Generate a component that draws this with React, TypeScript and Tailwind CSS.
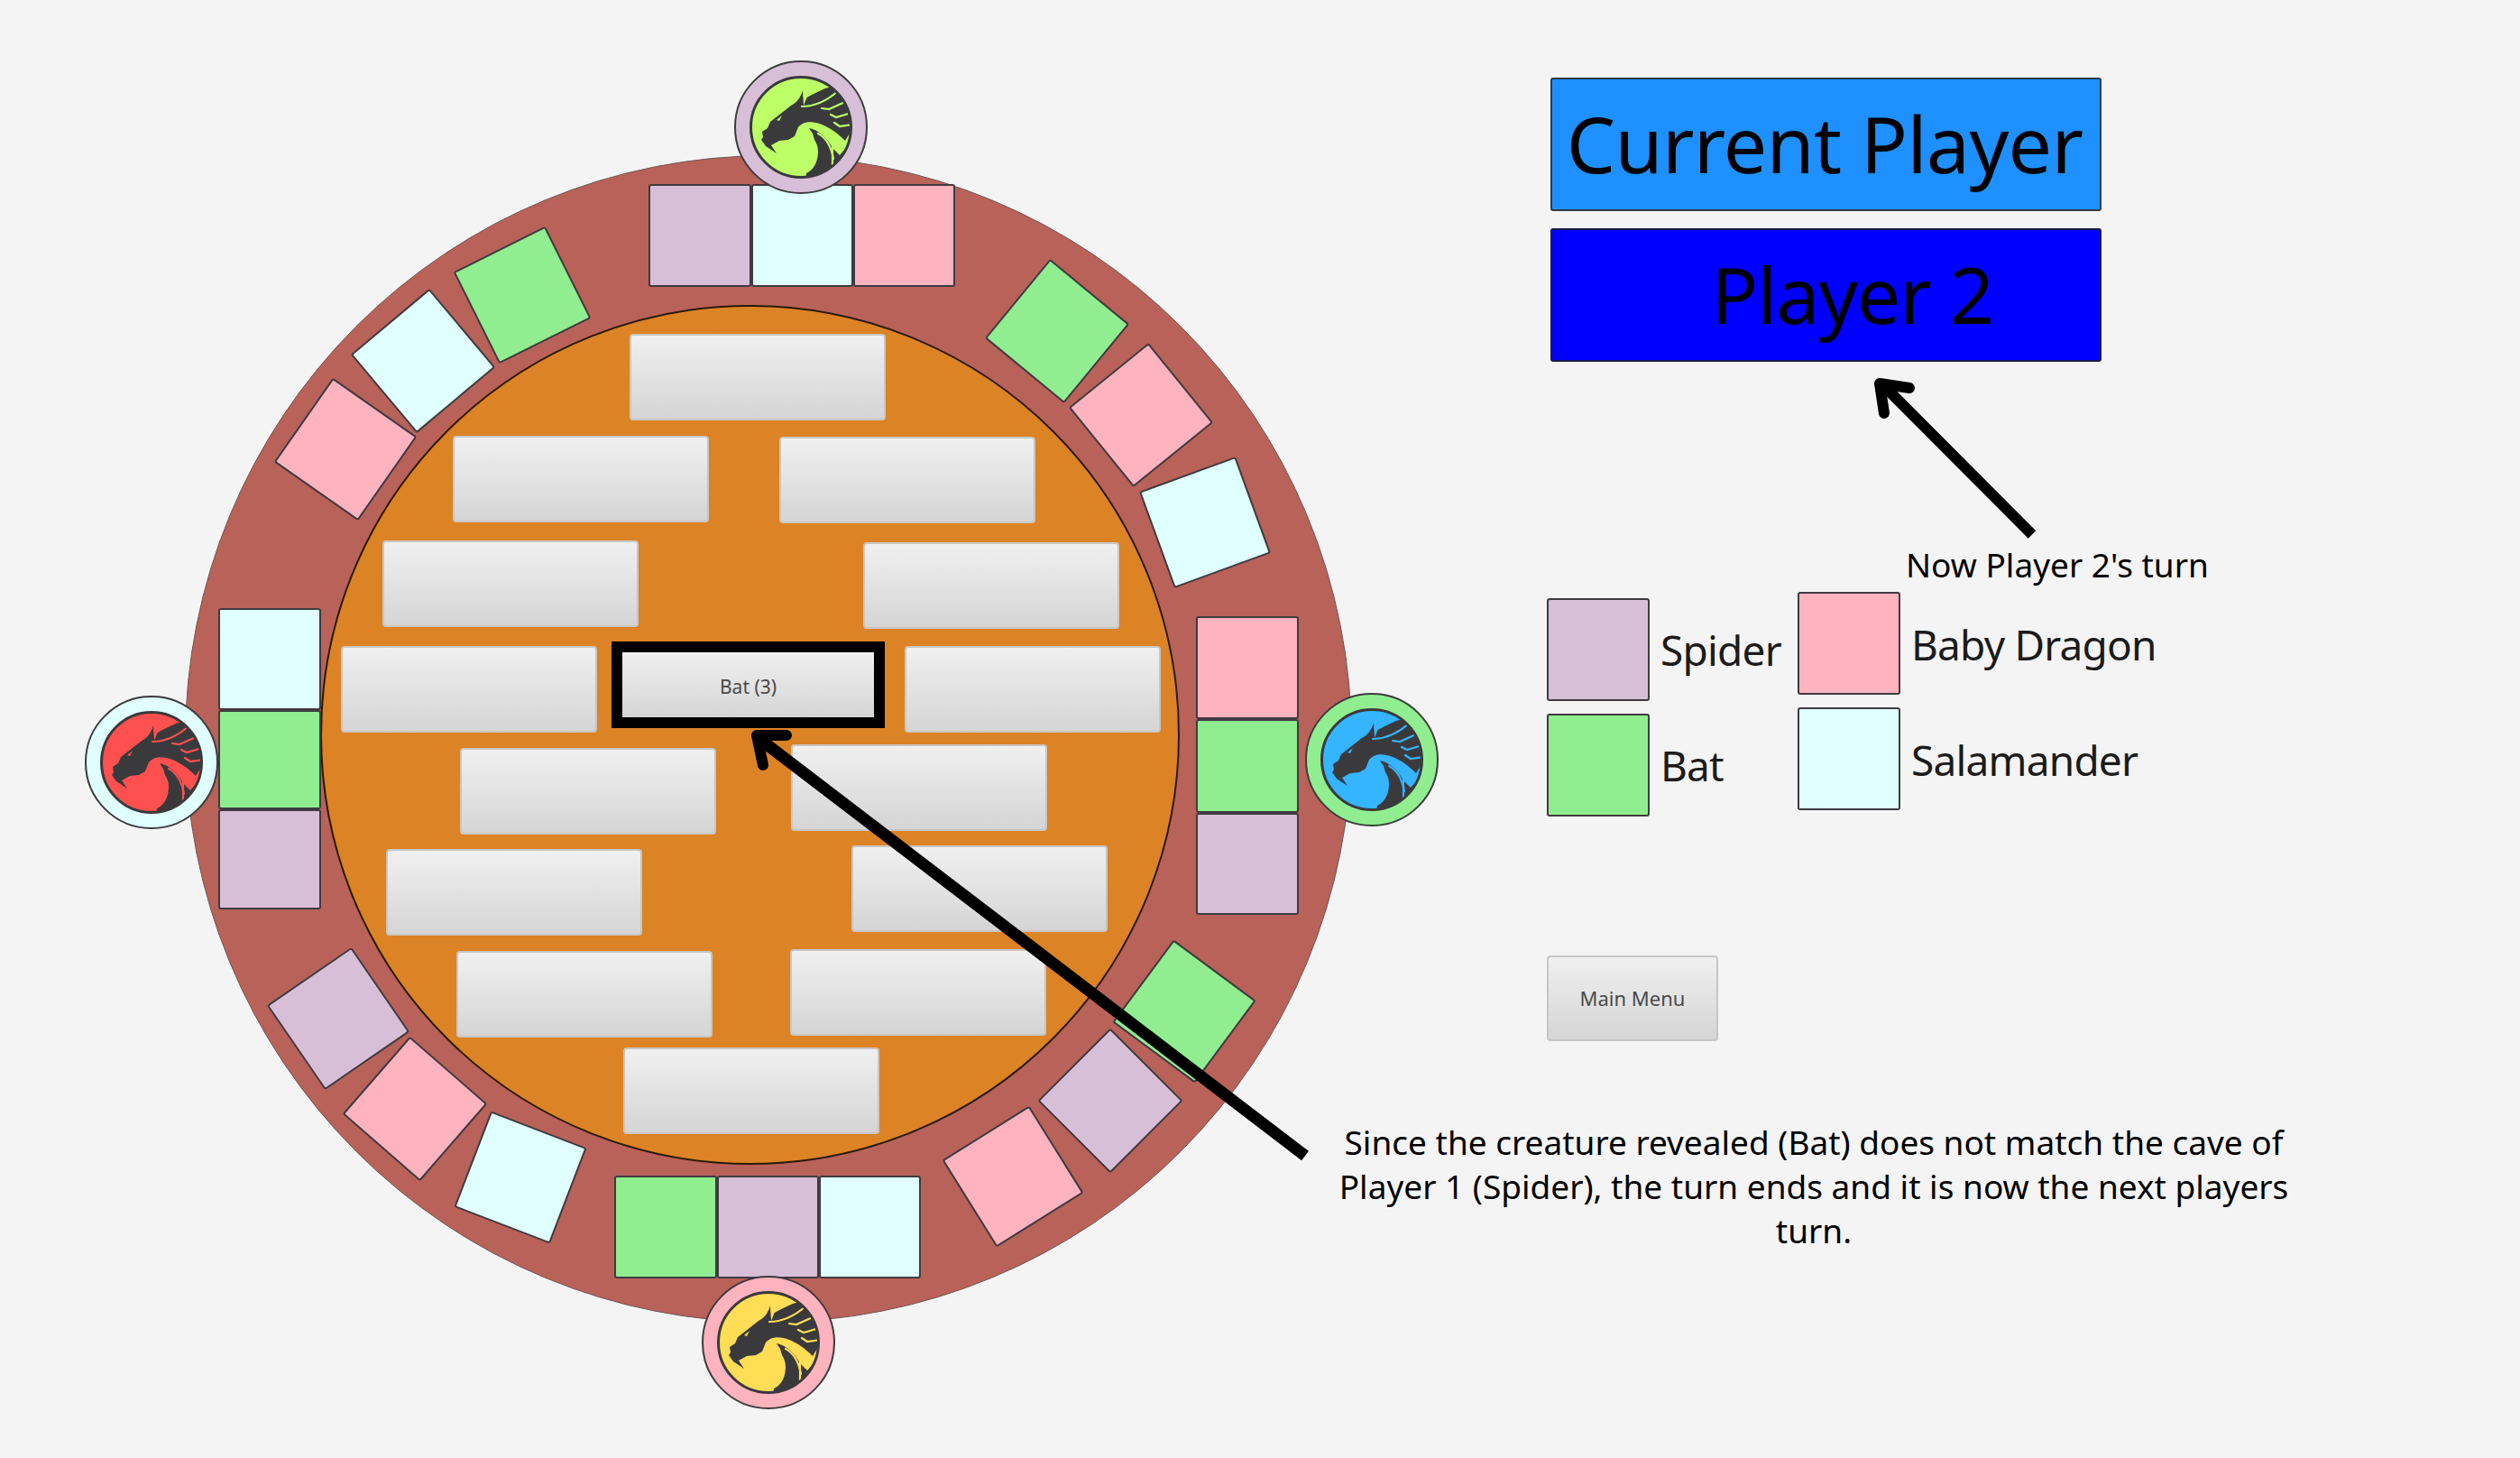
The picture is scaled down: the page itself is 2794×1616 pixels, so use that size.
const spider = "bg-[#d8bfd8]";
const bat = "bg-[#90ee90]";
const babyDragon = "bg-[#ffb3bf]";
const salamander = "bg-[#e0ffff]";

const angledTiles = [
  { color: bat, place: "left-[522px] top-[270px] rotate-[-26.5deg]" },
  { color: salamander, place: "left-[412px] top-[343px] rotate-[-40deg]" },
  { color: babyDragon, place: "left-[326px] top-[441px] rotate-[-55deg]" },
  { color: bat, place: "left-[1115px] top-[310px] rotate-[39.5deg]" },
  { color: babyDragon, place: "left-[1208px] top-[403px] rotate-[51deg]" },
  { color: salamander, place: "left-[1279px] top-[522px] rotate-[-20deg]" },
  { color: spider, place: "left-[318px] top-[1072px] rotate-[-34.5deg]" },
  { color: babyDragon, place: "left-[403px] top-[1172px] rotate-[-49deg]" },
  { color: salamander, place: "left-[520px] top-[1248px] rotate-[21deg]" },
  { color: bat, place: "left-[1256px] top-[1064px] rotate-[36.5deg]" },
  { color: spider, place: "left-[1174px] top-[1163px] rotate-[45deg]" },
  { color: babyDragon, place: "left-[1066px] top-[1247px] rotate-[-32deg]" },
];

const caveButtons = [
  "left-[698px] top-[370px]",
  "left-[502px] top-[483px]",
  "left-[864px] top-[484px]",
  "left-[424px] top-[599px]",
  "left-[957px] top-[601px]",
  "left-[378px] top-[716px]",
  "left-[1003px] top-[716px]",
  "left-[510px] top-[829px]",
  "left-[877px] top-[825px]",
  "left-[428px] top-[941px]",
  "left-[944px] top-[937px]",
  "left-[506px] top-[1054px]",
  "left-[876px] top-[1052px]",
  "left-[691px] top-[1161px]",
];

const buttonSkin = "bg-linear-to-b from-[#f0f0f0] to-[#d5d5d5] text-[#4a4a4a]";

function Tile({ color, className = "" }: { color: string; className?: string }) {
  return <div className={`rounded-[3px] border-2 border-[#3f3b40] ${color} ${className}`} />;
}

function DragonBadge({ id, ring, disc, place }: { id: string; ring: string; disc: string; place: string }) {
  return (
    <div className={`absolute flex h-[148px] w-[148px] items-center justify-center rounded-full border-2 border-[#3c3c3c] ${ring} ${place}`}>
      <svg viewBox="0 0 114 114" className={`h-[114px] w-[114px] ${disc}`}>
        <defs>
          <clipPath id={id}>
            <circle cx="57" cy="57" r="55" />
          </clipPath>
        </defs>
        <circle cx="57" cy="57" r="55.5" fill="currentColor" />
        <g clipPath={`url(#${id})`}>
          <path
            fill="#3a3a3c"
            d="M59 16 C57 24 52 30 46 33 L32 44 L23 51 L20 58 L14 62 L15 68 L13 71 L18 78 L30 86 L24 77 L33 72 L43 71 L50 67 L54 57 C60 50 70 50 80 54 C90 58 98 64 106 72 L116 56 L112 24 L98 10 L84 14 L64 23 L60 33 Z"
          />
          <path
            fill="#3a3a3c"
            d="M66 58 C76 60 86 68 92 80 L100 88 L116 70 L116 116 L62 116 L63 108 C72 104 76 94 76 84 C76 78 74 74 72 71 L70 64 Z"
          />
          <g fill="none" stroke="currentColor" strokeWidth="2.2" strokeLinecap="round">
            <path d="M58 34 C68 34 82 31 98 17" />
            <path d="M62 22 L84 10" strokeWidth="5" />
            <path d="M80 36 L88 37 L106 29" />
            <path d="M90 43 L96 46 L113 41" />
            <path d="M94 52 L100 56 L114 54" />
            <path d="M60 56 C72 53 88 60 104 76" strokeWidth="3" />
            <path d="M76 64 C84 68 90 76 93 92" />
            <path d="M92 78 L92 100" />
          </g>
          <path fill="currentColor" d="M30 49 L36 44 L33 50 Z" />
        </g>
        <circle cx="57" cy="57" r="55.5" fill="none" stroke="#3a3a3c" strokeWidth="3" />
      </svg>
    </div>
  );
}

function LegendRow({ color, label, labelClass = "" }: { color: string; label: string; labelClass?: string }) {
  return (
    <div className="flex h-[114px] items-center gap-[12px]">
      <Tile color={color} className="h-[114px] w-[114px]" />
      <span className={`text-[46px] tracking-[-0.8px] text-[#1b1b1b] ${labelClass}`}>{label}</span>
    </div>
  );
}

export default function App() {
  return (
    <div className="relative flex h-[1616px] w-[2794px] overflow-hidden bg-[#f4f4f4] font-['Noto_Sans',sans-serif]">
      <div className="relative h-full w-[1715px] shrink-0">
        <div className="absolute left-[205px] top-[172px] h-[1294px] w-[1294px] rounded-full border border-[#6f5552] bg-[#b9625a]" />
        <div className="absolute left-[355px] top-[338px] h-[953px] w-[953px] rounded-full border-2 border-[#2a1a08] bg-[#dc8326]" />

        <div className="absolute left-[719px] top-[204px] flex">
          <Tile color={spider} className="h-[114px] w-[114px]" />
          <Tile color={salamander} className="h-[114px] w-[113px]" />
          <Tile color={babyDragon} className="h-[114px] w-[113px]" />
        </div>
        <div className="absolute left-[1326px] top-[683px] flex flex-col">
          <Tile color={babyDragon} className="h-[114px] w-[114px]" />
          <Tile color={bat} className="h-[104px] w-[114px]" />
          <Tile color={spider} className="h-[113px] w-[114px]" />
        </div>
        <div className="absolute left-[242px] top-[674px] flex flex-col">
          <Tile color={salamander} className="h-[113px] w-[114px]" />
          <Tile color={bat} className="h-[110px] w-[114px]" />
          <Tile color={spider} className="h-[111px] w-[114px]" />
        </div>
        <div className="absolute left-[681px] top-[1303px] flex">
          <Tile color={bat} className="h-[114px] w-[114px]" />
          <Tile color={spider} className="h-[114px] w-[113px]" />
          <Tile color={salamander} className="h-[114px] w-[113px]" />
        </div>

        {angledTiles.map((tile) => (
          <Tile key={tile.place} color={tile.color} className={`absolute h-[114px] w-[114px] ${tile.place}`} />
        ))}

        {caveButtons.map((place) => (
          <div key={place} className={`absolute h-[96px] w-[284px] rounded-[4px] border-2 border-[#c9c6c2] ${buttonSkin} ${place}`} />
        ))}

        <div className={`absolute left-[678px] top-[711px] flex h-[96px] w-[303px] items-center justify-center border-[12px] border-black pt-[5px] text-[21px] ${buttonSkin}`}>
          Bat (3)
        </div>

        <DragonBadge id="disc-top" ring="bg-[#d8bfd8]" disc="text-[#bcff66]" place="left-[814px] top-[67px]" />
        <DragonBadge id="disc-left" ring="bg-[#e0ffff]" disc="text-[#ff5050]" place="left-[94px] top-[771px]" />
        <DragonBadge id="disc-right" ring="bg-[#90ee90]" disc="text-[#35b4ff]" place="left-[1447px] top-[768px]" />
        <DragonBadge id="disc-bottom" ring="bg-[#ffb3bf]" disc="text-[#ffdd55]" place="left-[778px] top-[1414px]" />
      </div>

      <div className="flex flex-col pt-[86px]">
        <div className="ml-[4px] flex h-[148px] w-[611px] items-center justify-center rounded-[3px] border-2 border-[#2a3a4a] bg-[#1e90ff] pb-[4px] pr-[3px] text-[86px] tracking-[-0.7px] text-black">
          Current Player
        </div>
        <div className="ml-[4px] mt-[19px] flex h-[148px] w-[611px] items-center justify-center rounded-[3px] border-2 border-[#1a1a4a] bg-[#0000ff] pb-[4px] pl-[58px] text-[86px] tracking-[-1.2px] text-black">
          Player 2
        </div>

        <p className="ml-[398px] mt-[201px] whitespace-nowrap text-[37px] leading-[48px] text-black">Now Player 2's turn</p>

        <div className="mt-[6px] flex">
          <div className="flex w-[278px] flex-col gap-[14px] pt-[7px]">
            <LegendRow color={spider} label="Spider" />
            <LegendRow color={bat} label="Bat" />
          </div>
          <div className="flex flex-col gap-[14px]">
            <LegendRow color={babyDragon} label="Baby Dragon" labelClass="pt-[2px]" />
            <LegendRow color={salamander} label="Salamander" labelClass="pt-[2px]" />
          </div>
        </div>

        <div className={`mt-[154px] flex h-[95px] w-[190px] items-center justify-center rounded-[4px] border-2 border-[#c6c6c6] text-[22px] ${buttonSkin}`}>
          Main Menu
        </div>

        <p className="-ml-[254px] mt-[87px] w-[1100px] text-center text-[37px] leading-[49px] text-black">
          Since the creature revealed (Bat) does not match the cave of Player 1 (Spider), the turn ends and it is now the next players turn.
        </p>
      </div>

      <svg viewBox="0 0 2794 1616" className="pointer-events-none absolute inset-0 h-full w-full">
        <g fill="none" stroke="#000" strokeLinejoin="round" strokeLinecap="round">
          <path d="M2253 592.5 L2088 427" strokeWidth="12" strokeLinecap="butt" />
          <path d="M2117 430 L2084 425 L2089 458" strokeWidth="12" />
          <path d="M1447 1281 L842 819" strokeWidth="13" strokeLinecap="butt" />
          <path d="M872 815 L839 815 L846 848" strokeWidth="12" />
        </g>
      </svg>
    </div>
  );
}
